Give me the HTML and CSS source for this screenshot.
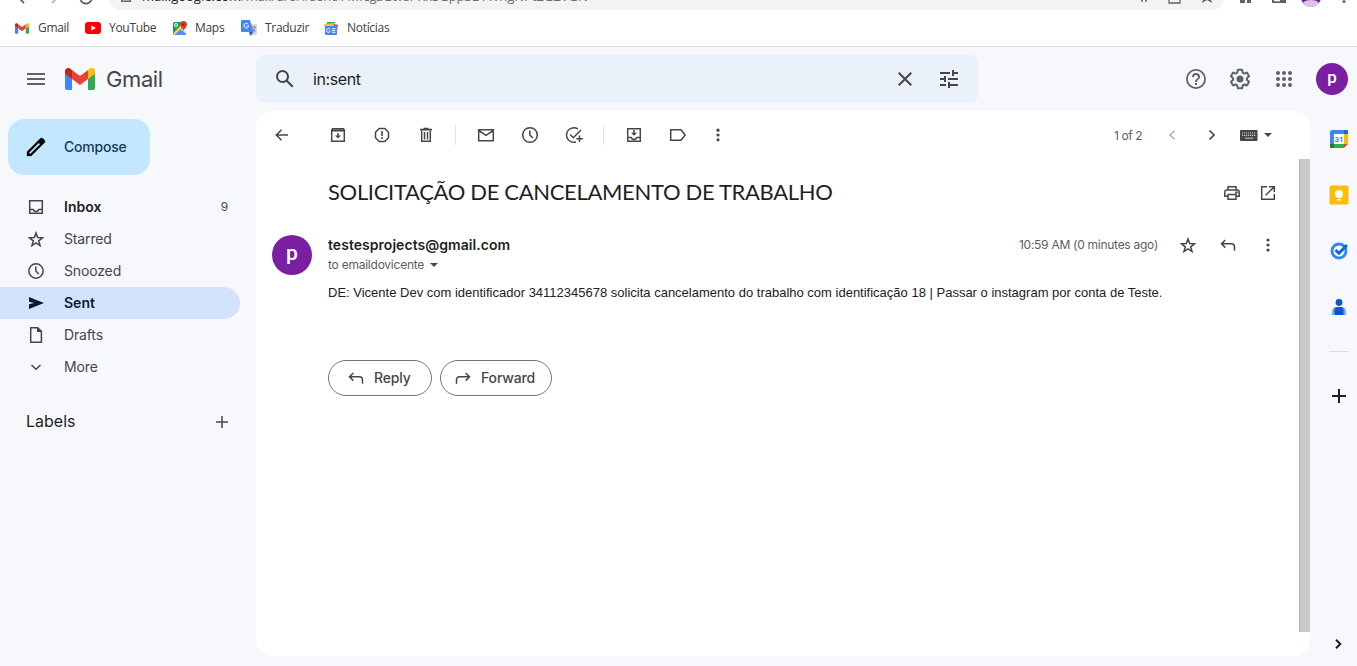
FILE: index.html
```html
<!DOCTYPE html>
<html lang="en">
<head>
<meta charset="utf-8">
<title>Gmail</title>
<link rel="stylesheet" href="styles.css">
</head>
<body>
<div class="browser">
  <div class="address-row">
    <div class="nav-icons">
      <svg width="100" height="20" viewBox="0 0 100 20" fill="none" stroke="#5f6368" stroke-width="1.8"><path d="M24 12l-6-6 6-6"/><path d="M52 12l6-6-6-6" stroke="#b5b7ba"/><path d="M80.500 9a6 6 0 0 0 11 0"/></svg>
    </div>
    <div class="omnibox">
      <svg width="10" height="12" viewBox="0 0 10 12"><path d="M0 4h10v8H0z" fill="#5f6368"/><path d="M1.500 5.500h7v5h-7z" fill="#f1f3f4"/></svg>
      <span class="url"><b>mail.google.com</b>/mail/u/0/#sent/FMfcgzGtvsPKxSGppSBTWngNPtZGZVGN</span>
      <svg class="omni-tools" width="84" height="14" viewBox="0 0 84 14" fill="none" stroke="#5f6368" stroke-width="1.300"><path d="M8 9h2M12 9h2"/><path d="M36 2v9h11V2"/><path d="M69 11l1.500-5 3.500 2 3.500-2 1.500 5-5-3z" fill="#5f6368" stroke="none"/></svg>
    </div>
    <svg class="chrome-tools" width="120" height="10" viewBox="0 0 120 10"><path d="M3 0h5v3H3zM10 0h4v3h-4z" fill="#5f6368"/><path d="M35 0h14v3H35z" fill="#5f6368"/><path d="M37 0h6v1.300h-6z" fill="#fff"/><circle cx="74" cy="-3" r="10" fill="#7b1fa2"/><path d="M66 3c2-4 14-4 16 0a10 10 0 0 1-16 0z" fill="#dcc3e8"/><circle cx="107" cy="1.500" r="1.500" fill="#5f6368"/></svg>
  </div>
  <nav class="bookmarks">
    <a class="bm bm-gmail"><svg width="14" height="11" viewBox="0 0 30 22"><path fill="#4285f4" d="M2 22h5V10.500L0 5v15a2 2 0 0 0 2 2z"/><path fill="#34a853" d="M23 22h5a2 2 0 0 0 2-2V5l-7 5.500z"/><path fill="#fbbc04" d="M23 2v9l7-5.300V3c0-2.500-3-4-5-2.500z"/><path fill="#ea4335" d="M7 11V2l8 6 8-6v9l-8 6z"/><path fill="#c5221f" d="M0 3v2.700L7 11V2L5 .5C3-1 0 .5 0 3z"/></svg>Gmail</a>
    <a class="bm bm-youtube"><svg width="16" height="12" viewBox="0 0 16 12"><rect width="16" height="12" rx="3" fill="#f00"/><path d="M6.300 3.400v5.200L11 6z" fill="#fff"/></svg>YouTube</a>
    <a class="bm bm-maps"><svg width="16" height="15" viewBox="0 0 16 15"><rect x="1" y="1" width="13" height="13" rx="1.500" fill="#1a9e5c"/><path d="M1.500 14L8 7l6 7z" fill="#4d90fe"/><path d="M1 12.500L11 2l2 2L2.500 14z" fill="#ffd04b"/><path d="M8.500 8L14 13V7z" fill="#dfe3e8"/><circle cx="4" cy="4" r="1.500" fill="none" stroke="#fff"/><path d="M11.500 0a3.500 3.500 0 0 1 3.500 3.500C15 6 12 7 11.500 10 11 7 8 6 8 3.500A3.500 3.500 0 0 1 11.500 0z" fill="#df3b2f"/><circle cx="11.500" cy="3.500" r="1.200" fill="#8c1f17"/></svg>Maps</a>
    <a class="bm bm-translate"><svg width="16" height="16" viewBox="0 0 16 16"><path d="M7 4h8a1 1 0 0 1 1 1v9a1 1 0 0 1-1 1H9z" fill="#d5d9df"/><path d="M1 0h8l3.500 12H1a1 1 0 0 1-1-1V1a1 1 0 0 1 1-1z" fill="#4886ec"/><path d="M8 12h4.500L9.500 16z" fill="#2f5fc0"/><path d="M7.300 4.300A2.400 2.400 0 1 0 7.700 6H5.500" fill="none" stroke="#fff"/><path d="M11 7h4M13 6v1M11.500 12c1.500-1 2.500-3 2.700-5M12 9l2.500 3" stroke="#7b8290" fill="none" stroke-width=".9"/></svg>Traduzir</a>
    <a class="bm bm-news"><svg width="14" height="13" viewBox="0 0 14 13"><path d="M3 0h8v4H3z" fill="#2fa75b"/><path d="M0 2l11-1v5H1z" fill="#f4c236"/><path d="M9 2l5 .700-1 6z" fill="#df4b3e"/><rect x="1" y="4" width="12" height="9" rx="1" fill="#4386f5"/><path d="M6 7.200A2 2 0 1 0 6.300 9H5M8 6.800h3.500M8 8.500h3M8 10.300h3.500" stroke="#fff" stroke-width=".9" fill="none"/></svg>Notícias</a>
  </nav>
</div>

<div class="app">
  <header class="topbar">
    <div class="brand">
      <svg class="menu" width="24" height="24" viewBox="0 0 24 24"><path d="M3 18h18v-2H3v2zm0-5h18v-2H3v2zm0-7v2h18V6H3z"/></svg>
      <svg class="logo" width="30" height="22" viewBox="0 0 30 22"><path fill="#4285f4" d="M2 22h5V10.500L0 5v15a2 2 0 0 0 2 2z"/><path fill="#34a853" d="M23 22h5a2 2 0 0 0 2-2V5l-7 5.500z"/><path fill="#fbbc04" d="M23 2v9l7-5.300V3c0-2.500-3-4-5-2.500z"/><path fill="#ea4335" d="M7 11V2l8 6 8-6v9l-8 6z"/><path fill="#c5221f" d="M0 3v2.700L7 11V2L5 .5C3-1 0 .5 0 3z"/></svg>
      <span class="wordmark">Gmail</span>
    </div>
    <div class="search">
      <svg width="24" height="24" viewBox="0 0 24 24"><path d="M20.490 19l-5.730-5.730C15.530 12.200 16 10.910 16 9.500A6.500 6.500 0 1 0 9.500 16c1.410 0 2.700-.470 3.770-1.240L19 20.490 20.490 19zM5 9.500C5 7.010 7.010 5 9.500 5S14 7.010 14 9.500 11.990 14 9.500 14 5 11.990 5 9.500z"/></svg>
      <span class="query">in:sent</span>
      <svg width="24" height="24" viewBox="0 0 24 24"><path d="M19 6.410L17.590 5 12 10.590 6.410 5 5 6.410 10.590 12 5 17.590 6.410 19 12 13.410 17.590 19 19 17.590 13.410 12z"/></svg>
      <svg class="tune" width="24" height="24" viewBox="0 0 24 24"><path d="M3 17v2h6v-2H3zM3 5v2h10V5H3zm10 16v-2h8v-2h-8v-2h-2v6h2zM7 9v2H3v2h4v2h2V9H7zm14 4v-2H11v2h10zm-6-4h2V7h4V5h-4V3h-2v6z"/></svg>
    </div>
    <div class="account-tools">
      <svg width="24" height="24" viewBox="0 0 24 24"><path d="M12 2a10 10 0 1 0 0 20 10 10 0 0 0 0-20zm0 18.200a8.200 8.200 0 1 1 0-16.400 8.200 8.200 0 0 1 0 16.400zM11 16h2v2h-2zM12 6a4 4 0 0 0-4 4h2a2 2 0 1 1 4 0c0 2-3 1.800-3 5h2c0-2.200 3-2.500 3-5a4 4 0 0 0-4-4z"/></svg>
      <svg width="24" height="24" viewBox="0 0 24 24"><path d="M13.850 22.250h-3.700c-.740 0-1.360-.540-1.450-1.270l-.270-1.890c-.270-.140-.530-.290-.790-.460l-1.800.720c-.7.260-1.470-.030-1.810-.650L2.200 15.530c-.350-.660-.2-1.440.360-1.880l1.530-1.190c-.010-.150-.020-.3-.020-.460 0-.150.010-.310.020-.460l-1.520-1.190c-.590-.450-.740-1.260-.370-1.880l1.850-3.190c.340-.620 1.110-.9 1.790-.630l1.810.730c.260-.170.520-.320.780-.460l.270-1.910c.090-.7.710-1.250 1.440-1.250h3.700c.740 0 1.360.540 1.450 1.270l.270 1.890c.270.140.530.290.790.460l1.800-.720c.710-.260 1.480.030 1.820.650l1.840 3.180c.360.660.2 1.440-.360 1.880l-1.520 1.190c.010.150.020.3.020.460s-.010.310-.020.460l1.520 1.190c.560.450.720 1.230.370 1.860l-1.860 3.220c-.340.620-1.110.9-1.800.630l-1.800-.720c-.260.170-.520.320-.780.460l-.270 1.910c-.100.680-.720 1.220-1.460 1.220zm-3.230-2h2.760l.370-2.550.530-.220c.440-.180.880-.440 1.340-.780l.450-.340 2.380.960 1.380-2.400-2.030-1.580.070-.560c.030-.260.060-.510.060-.780s-.030-.530-.060-.780l-.070-.560 2.030-1.580-1.390-2.400-2.390.960-.450-.350c-.420-.320-.870-.580-1.330-.770l-.520-.220-.370-2.550h-2.760l-.370 2.550-.530.210c-.440.190-.880.440-1.340.790l-.450.330-2.380-.950-1.390 2.390 2.030 1.580-.070.560a7 7 0 0 0-.060.790c0 .260.020.530.060.780l.070.560-2.030 1.580 1.380 2.400 2.390-.960.450.350c.430.330.860.580 1.330.770l.530.220z"/><circle cx="12" cy="12" r="3.500"/></svg>
      <svg width="24" height="24" viewBox="0 0 24 24"><circle cx="6" cy="6" r="2"/><circle cx="12" cy="6" r="2"/><circle cx="18" cy="6" r="2"/><circle cx="6" cy="12" r="2"/><circle cx="12" cy="12" r="2"/><circle cx="18" cy="12" r="2"/><circle cx="6" cy="18" r="2"/><circle cx="12" cy="18" r="2"/><circle cx="18" cy="18" r="2"/></svg>
      <span class="avatar avatar-small">p</span>
    </div>
  </header>

  <div class="workspace">
    <aside class="sidebar">
      <button class="compose"><svg width="24" height="24" viewBox="0 0 24 24"><path d="M20.410 4.940l-1.350-1.350a2 2 0 0 0-2.830 0L3 16.820V21h4.180L20.410 7.770a2 2 0 0 0 0-2.830zM6.350 19.060l-1.410-1.410 9.800-9.800 1.410 1.410z" stroke="#000" stroke-width=".3"/></svg><span>Compose</span></button>
      <ul class="folders">
        <li class="inbox"><svg width="20" height="20" viewBox="0 0 20 20" class="line"><path d="M3.700 3.700h12.600v12.600H3.700zM3.700 12.500h3.500c.5 1.500 1.500 2 2.800 2s2.300-.5 2.800-2h3.500"/></svg><span>Inbox</span><em>9</em></li>
        <li><svg width="20" height="20" viewBox="0 0 20 20" class="line"><path d="M10 4l1.700 4.600 4.800.200-3.800 3 1.300 4.700L10 13.800l-4 2.700 1.300-4.700-3.800-3 4.800-.2z"/></svg><span>Starred</span></li>
        <li><svg width="20" height="20" viewBox="0 0 20 20" class="line"><circle cx="10" cy="10" r="7.200"/><path d="M9.800 5.500V10l3 3"/></svg><span>Snoozed</span></li>
        <li class="active"><svg width="20" height="20" viewBox="0 0 20 20"><path d="M3 4v4.800l5 1.200-5 1.200V16l15-6z"/></svg><span>Sent</span></li>
        <li><svg width="20" height="20" viewBox="0 0 20 20" class="line"><path d="M4.700 2.700h7l3.700 3.700v10.900H4.700z"/><path d="M11 2.700h1l3.400 3.400v1H11z" fill="#444746" stroke="none"/></svg><span>Drafts</span></li>
        <li><svg width="20" height="20" viewBox="0 0 20 20" class="line"><path d="M5.500 8l4.500 4.300L14.500 8"/></svg><span>More</span></li>
      </ul>
      <div class="labels"><span>Labels</span><svg width="20" height="20" viewBox="0 0 20 20" class="line"><path d="M10 4v12M4 10h12"/></svg></div>
    </aside>

    <main class="card">
      <div class="toolbar">
        <span class="tool back"><svg width="20" height="20" viewBox="0 0 20 20" class="line"><path d="M16 10H4.500M9.500 4.800L4.300 10l5.200 5.200"/></svg></span>
        <span class="tool"><svg width="20" height="20" viewBox="0 0 20 20" class="line"><path d="M3.700 5l1-1.300h10.600l1 1.300v11.300H3.700z"/><path d="M3.700 5.500h12.600" stroke-width="2"/><path d="M10 8v4"/><path d="M7 10.500h6l-3 3z" fill="#444746" stroke="none"/></svg></span>
        <span class="tool"><svg width="20" height="20" viewBox="0 0 20 20" class="line"><path d="M7.200 3.500h5.600l3.700 3.700v5.600l-3.700 3.700H7.200l-3.700-3.700V7.200z"/><path d="M10 6v5M10 12.300V14" stroke-width="1.600"/></svg></span>
        <span class="tool"><svg width="20" height="20" viewBox="0 0 20 20" class="line"><path d="M5.700 5.500v10.800h8.600V5.500M8.500 7v7.500M11.500 7v7.500"/><path d="M4 4.700h12M7.500 3.600h5" stroke-width="1.700"/></svg></span>
        <i class="divider"></i>
        <span class="tool"><svg width="20" height="20" viewBox="0 0 20 20" class="line"><path d="M2.700 4.700h14.600v11H2.700zM2.700 5.500L10 10.300l7.300-4.800"/></svg></span>
        <span class="tool"><svg width="20" height="20" viewBox="0 0 20 20" class="line"><circle cx="10" cy="10" r="7.300"/><path d="M9.800 5.500V10l3 3"/></svg></span>
        <span class="tool"><svg width="20" height="20" viewBox="0 0 20 20" class="line"><path d="M14 4A7.300 7.300 0 1 0 12 17M6 9.500l3.300 3.300 7.700-7.800M15.500 10.500v6.500M12.300 13.700h6.500"/></svg></span>
        <i class="divider"></i>
        <span class="tool"><svg width="20" height="20" viewBox="0 0 20 20" class="line"><path d="M3.700 3.700h12.600v12.600H3.700zM3.700 12.500h3.500c.5 1.500 1.500 2 2.800 2s2.300-.5 2.800-2h3.500M10 5v4.500"/><path d="M7 7.700h6l-3 3z" fill="#444746" stroke="none"/></svg></span>
        <span class="tool"><svg width="20" height="20" viewBox="0 0 20 20" class="line"><path d="M2.700 4.700H13l4.200 5.300-4.200 5.300H2.700z"/></svg></span>
        <span class="tool more"><svg width="20" height="20" viewBox="0 0 20 20"><circle cx="10" cy="5.200" r="1.600"/><circle cx="10" cy="10" r="1.600"/><circle cx="10" cy="14.800" r="1.600"/></svg></span>
        <span class="counter">1 of 2</span>
        <span class="pager"><svg width="20" height="20" viewBox="0 0 20 20" class="line faded"><path d="M12.500 5.700L8 10l4.500 4.300"/></svg></span>
        <span class="pager"><svg width="20" height="20" viewBox="0 0 20 20" class="line"><path d="M7.500 5.500l4.500 4.500-4.500 4.500" stroke-width="1.700"/></svg></span>
        <svg class="keyboard" width="18" height="12" viewBox="0 0 18 12"><rect y="1" width="17.500" height="11" rx=".8"/><path d="M2 4h14M2 6.400h14" stroke="#c8c8c8" stroke-width="1.100" stroke-dasharray="1.200 .8"/><path d="M5 9.200h8" stroke="#c8c8c8"/></svg>
        <svg class="caret" width="8" height="4" viewBox="0 0 8 4"><path d="M0 0h8L4 4z"/></svg>
      </div>
      <div class="reader">
        <article class="message">
          <div class="subject-row">
            <h1>SOLICITAÇÃO DE CANCELAMENTO DE TRABALHO</h1>
            <svg width="20" height="20" viewBox="0 0 20 20" class="line"><path d="M6 7V3.700h8V7M6 13.300H2.800V9c0-1.300.7-2 2-2h10.400c1.300 0 2 .7 2 2v4.300H14M6 11.500h8v4.800H6z"/><circle cx="14.500" cy="9.500" r=".6"/></svg>
            <svg width="20" height="20" viewBox="0 0 20 20" class="line"><path d="M9 3.700H3.700v12.600h12.600V11M11 3.700h5.300V9M16 4l-8.300 8.300"/></svg>
          </div>
          <div class="sender-row">
            <span class="avatar">p</span>
            <div class="sender">
              <strong>testesprojects@gmail.com</strong>
              <div class="recipient"><span>to emaildovicente</span><svg width="8" height="4" viewBox="0 0 8 4"><path d="M0 0h8L4 4z"/></svg></div>
            </div>
            <div class="meta">
              <span class="time">10:59 AM (0 minutes ago)</span>
              <svg width="20" height="20" viewBox="0 0 20 20" class="line"><path d="M10 4l1.700 4.600 4.800.200-3.800 3 1.300 4.700L10 13.800l-4 2.700 1.300-4.700-3.800-3 4.800-.2z"/></svg>
              <svg width="20" height="20" viewBox="0 0 20 20" class="line"><path d="M7.300 5L3.500 8.800l3.800 3.800M3.800 8.800h9.500c2.200 0 3.200 1.200 3.200 3.200v3.700"/></svg>
              <svg width="20" height="20" viewBox="0 0 20 20"><circle cx="10" cy="5" r="1.600"/><circle cx="10" cy="10" r="1.600"/><circle cx="10" cy="15" r="1.600"/></svg>
            </div>
          </div>
          <p class="body-text">DE: Vicente Dev com identificador 34112345678 solicita cancelamento do trabalho com identificação 18 | Passar o instagram por conta de Teste.</p>
          <div class="actions">
            <button class="pill reply"><svg width="20" height="20" viewBox="0 0 20 20" class="line"><path d="M7.300 5L3.500 8.800l3.800 3.800M3.800 8.800h9.500c2.200 0 3.200 1.200 3.200 3.200v3.700"/></svg><span>Reply</span></button>
            <button class="pill forward"><svg width="20" height="20" viewBox="0 0 20 20" class="line"><path d="M12.700 5l3.800 3.800-3.800 3.800M16.200 8.800H6.700c-2.200 0-3.200 1.200-3.200 3.200v3.700"/></svg><span>Forward</span></button>
          </div>
        </article>
        <div class="scrollbar"></div>
      </div>
    </main>

    <aside class="side-panel">
      <svg width="20" height="20" viewBox="0 0 20 20"><path d="M2.500 1H15v4H5.500v10.500H1V2.500z" fill="#4285f4"/><path d="M15 1h3a1 1 0 0 1 1 1v3h-4z" fill="#1967d2"/><path d="M15 5h4v10h-4z" fill="#fbbc04"/><path d="M5 15h10v4H5z" fill="#34a853"/><path d="M1 15h4v4H2a1 1 0 0 1-1-1z" fill="#188038"/><path d="M15 15h4l-4 4z" fill="#ea4335"/><path d="M5 5h10v10H5z" fill="#fff"/><text x="10" y="13" class="cal-day">31</text></svg>
      <svg width="20" height="20" viewBox="0 0 20 20"><rect x=".5" y=".5" width="19" height="19" rx="1.500" fill="#fbbc04"/><circle cx="10" cy="9" r="4" fill="#fff"/><path d="M8 11h4v2H8zM8 14h4v1.500H8z" fill="#fff"/></svg>
      <svg width="20" height="20" viewBox="0 0 20 20" fill="none"><circle cx="10" cy="10" r="7" stroke="#2e87f7" stroke-width="2.800"/><path d="M6.500 9l3.500 3.300 8-8.300" stroke="#0a66d8" stroke-width="2.800"/></svg>
      <svg width="20" height="20" viewBox="0 0 20 20"><circle cx="10" cy="5.500" r="3.400" fill="#0b57d0"/><path d="M3 18v-3.500A4.500 4.500 0 0 1 7.500 10h5a4.500 4.500 0 0 1 4.500 4.500V18z" fill="#78a6f5"/><path d="M5.500 18v-6a4 4 0 0 1 2-2h5a4 4 0 0 1 2 2v6z" fill="#0b57d0"/></svg>
      <i class="rule"></i>
      <svg class="add" width="20" height="20" viewBox="0 0 20 20"><path d="M10 3v14M3 10h14" stroke="#1f1f1f" stroke-width="2"/></svg>
      <svg class="collapse" width="20" height="20" viewBox="0 0 20 20" fill="none"><path d="M7 5.700l4.300 4.300L7 14.300" stroke="#1f1f1f" stroke-width="2"/></svg>
    </aside>
  </div>
</div>
</body>
</html>
```
FILE: styles.css
```css
* { box-sizing: border-box; }
body { margin: 0; width: 1357px; height: 666px; overflow: hidden; background: #f6f8fc; color: #202124; font-family: Inter, "Liberation Sans", sans-serif; }
svg { display: block; flex: none; }
button { border: 0; padding: 0; font: inherit; }

.browser { height: 47px; background: #fff; border-bottom: 1px solid #dcdde0; overflow: hidden; }
.address-row { display: flex; height: 10px; overflow: hidden; }
.nav-icons { width: 108px; margin-top: -9px; }
.omnibox { display: flex; width: 1118px; height: 28px; margin-top: -18px; padding: 0 8px 0 13px; border-radius: 14px; background: #f1f3f4; align-items: center; }
.url { margin-left: 11px; white-space: nowrap; font: 13px/20px "Open Sans", sans-serif; color: #6b6f73; }
.url b { font-weight: 400; color: #202124; }
.omni-tools { margin: 6px 0 0 auto; }
.chrome-tools { margin-left: 12px; }
.bookmarks { display: flex; height: 36px; align-items: center; font: 12px/16px "Open Sans", sans-serif; letter-spacing: -.3px; color: #3c4043; }
.bm { display: flex; align-items: center; gap: 8px; }
.bm-gmail { margin-left: 15px; width: 70px; gap: 9px; }
.bm-youtube { width: 87px; }
.bm-maps { width: 69px; gap: 7px; }
.bm-translate { width: 83px; }
.bm-news { gap: 9px; }

.topbar { display: flex; height: 64px; align-items: center; fill: #5f6368; }
.brand { display: flex; align-items: center; width: 256px; padding-left: 24px; }
.logo { margin-left: 17px; }
.wordmark { margin-left: 11px; font: 22px/28px Inter, sans-serif; color: #444746; letter-spacing: -.4px; }
.search { display: flex; align-items: center; width: 722px; height: 48px; padding: 0 17px; border-radius: 8px; background: #eaf1fb; fill: #444746; }
.query { flex: 1; margin-left: 16px; font-size: 16px; letter-spacing: -.4px; color: #1f1f1f; }
.tune { margin-left: 20px; }
.account-tools { display: flex; align-items: center; gap: 20px; margin-left: auto; padding-right: 9px; }
.avatar { display: flex; flex: none; width: 40px; height: 40px; border-radius: 50%; background: #7b1fa2; color: #fff; justify-content: center; align-items: center; font: 500 21px/30px Roboto, sans-serif; padding-bottom: 5px; }
.avatar-small { width: 32px; height: 32px; font-size: 17px; }

.workspace { display: flex; height: 545px; }
.sidebar { width: 256px; padding-top: 8px; font-size: 14px; letter-spacing: -.15px; color: #444746; fill: #444746; }
.sidebar span, .folders em { padding-bottom: 2px; }
.line { fill: none; stroke: #444746; stroke-width: 1.5; }
.faded { stroke: #b0b2b3; }
.compose { display: flex; align-items: center; gap: 16px; width: 142px; height: 56px; margin-left: 8px; padding-left: 16px; border-radius: 16px; background: #c2e7ff; color: #1b3a52; fill: #000; font-size: 14px; font-weight: 500; letter-spacing: -.2px; }
.folders { list-style: none; margin: 16px 0 0; padding: 0; }
.folders li { display: flex; align-items: center; gap: 18px; width: 240px; height: 32px; padding: 0 12px 0 26px; border-radius: 0 16px 16px 0; }
.folders em { margin-left: auto; font-style: normal; font-size: 12px; }
.folders .inbox span { font-weight: 600; color: #1f1f1f; letter-spacing: 0; }
.folders .active { background: #d3e3fd; color: #001d35; fill: #001d35; font-weight: 600; letter-spacing: 0; }
.labels { display: flex; justify-content: space-between; align-items: center; margin-top: 28px; padding: 0 24px 0 26px; font-size: 16px; letter-spacing: 0; color: #1f1f1f; }

.card { width: 1054px; height: 545px; border-radius: 16px; background: #fff; overflow: hidden; fill: #444746; }
.toolbar { display: flex; align-items: center; height: 48px; padding-left: 4px; }
.tool { display: flex; justify-content: center; width: 44px; }
.back { margin-right: 12px; }
.divider { width: 1px; height: 20px; margin: 0 8px 0 7px; background: #e4e5e7; }
.more { width: 36px; }
.counter { margin-left: auto; width: 28px; white-space: nowrap; font-size: 12px; letter-spacing: -.4px; color: #5e5e5e; }
.pager { display: flex; width: 20px; margin-left: 20px; }
.keyboard { margin-left: 18px; }
.caret { margin: 0 38px 0 6px; }

.reader { display: flex; height: 497px; }
.message { flex: 1; }
.scrollbar { width: 11px; height: 473px; background: #c9c9c9; border-left: 1px solid #b7b7b7; }
.subject-row { display: flex; align-items: center; height: 68px; padding: 0 21px 0 72px; gap: 16px; }
.subject-row h1 { flex: 1; margin: 0; padding-bottom: 2px; font: 400 22px/28px Lato, sans-serif; letter-spacing: -.33px; color: #1f1f1f; white-space: nowrap; }
.sender-row { display: flex; height: 48px; padding: 8px 21px 0 16px; }
.sender { margin-left: 16px; }
.sender strong { display: block; font-size: 14px; line-height: 20px; font-weight: 600; letter-spacing: .04px; color: #1f1f1f; }
.recipient { display: flex; align-items: center; gap: 6px; font-size: 12px; line-height: 20px; letter-spacing: -.24px; color: #5e5e5e; }
.meta { display: flex; align-items: center; height: 20px; gap: 20px; margin-left: auto; }
.time { padding-bottom: 1px; font-size: 12px; letter-spacing: -.27px; color: #5e5e5e; }
.body-text { margin: 10px 0 0 72px; font: 13px/16px "Liberation Sans", Arial, sans-serif; color: #222; white-space: nowrap; }
.actions { display: flex; gap: 8px; margin: 59px 0 0 72px; }
.pill { display: flex; align-items: center; gap: 8px; height: 36px; padding-left: 17px; border: 1px solid #747775; border-radius: 18px; background: #fff; color: #444746; font-size: 14px; font-weight: 500; letter-spacing: -.15px; }
.pill span { padding-bottom: 2px; }
.reply { width: 104px; }
.forward { width: 112px; padding-left: 12px; }
.side-panel { display: flex; flex-direction: column; align-items: center; width: 47px; padding: 18px 0 2px 11px; gap: 36px; }
.cal-day { font: 500 8px Roboto, sans-serif; fill: #1a73e8; text-anchor: middle; }
.rule { width: 20px; height: 1px; margin-top: -2px; background: #dcdee1; }
.add { margin-top: -2px; }
.collapse { margin-top: auto; }
```
